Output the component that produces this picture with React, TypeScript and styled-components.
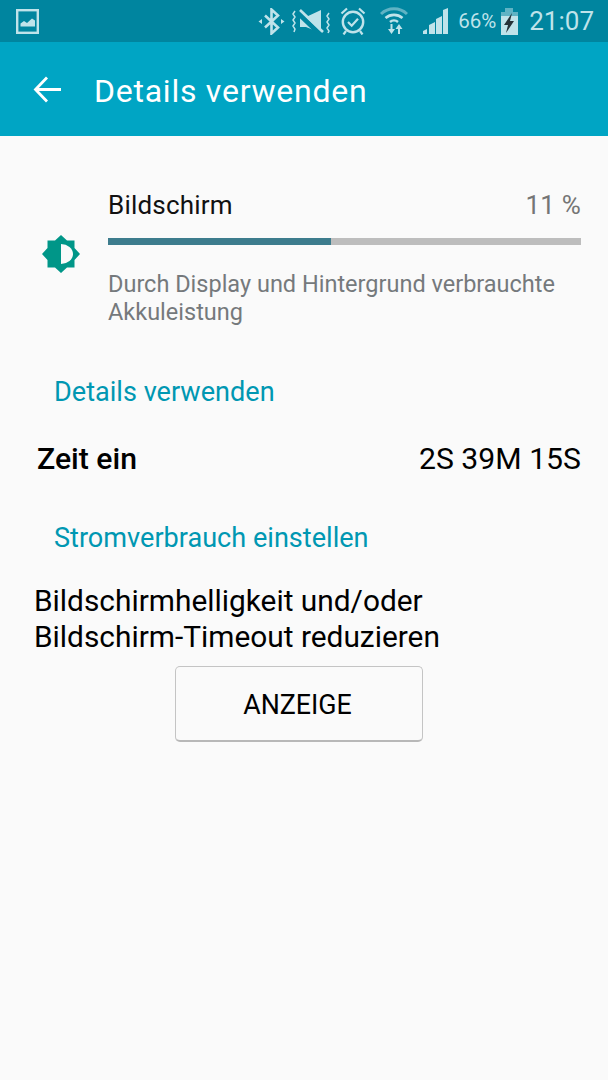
import styled, { createGlobalStyle } from 'styled-components';

const GlobalStyle = createGlobalStyle`
  html, body {
    margin: 0;
    padding: 0;
    background: #fafafa;
  }
  * {
    box-sizing: border-box;
  }
`

const Page = styled.div`
  width: 608px;
  height: 1080px;
  background: #fafafa;
  font-family: Roboto, "Noto Sans", sans-serif;
  overflow: hidden;
`

const StatusBar = styled.div`
  height: 42px;
  background: #00859f;
  color: #bfe3ea;
  display: flex;
  align-items: center;
  padding: 0 14px 0 16px;
`

const StatusRight = styled.div`
  margin-left: auto;
  display: flex;
  align-items: center;
`

const StatusIcon = styled.svg<{ $gap: number }>`
  display: block;
  margin-left: ${(p) => p.$gap}px;
  flex-shrink: 0;
`

const Percent = styled.span`
  font-size: 20.5px;
  margin-left: 10px;
`

const Clock = styled.span`
  font-size: 26px;
  margin-left: 11px;
`

const AppBar = styled.header`
  height: 94px;
  background: #00a5c4;
  color: #fff;
  display: flex;
  align-items: center;
  padding: 0 0 0 33px;
`

const Title = styled.h1`
  margin: 3px 0 0 32px;
  font-size: 32px;
  font-weight: 400;
  letter-spacing: 0.75px;
`

const UsageRow = styled.section`
  display: flex;
  align-items: flex-start;
  padding: 50px 27px 0 42px;
`

const UsageIcon = styled.svg`
  display: block;
  flex-shrink: 0;
  margin-top: 49px;
`

const UsageBody = styled.div`
  flex: 1;
  margin-left: 28px;
`

const UsageHead = styled.div`
  display: flex;
  justify-content: space-between;
  font-size: 26px;
  letter-spacing: 0.2px;
  line-height: 38px;
  color: #111;
`

const UsageValue = styled.span`
  color: #757575;
`

const Bar = styled.div`
  height: 7px;
  margin-top: 14px;
  background: #bdbdbd;
`

const BarFill = styled.div`
  height: 100%;
  background: #3d7c8d;
`

const Description = styled.p`
  margin: 25px 0 0;
  font-size: 23.5px;
  line-height: 28px;
  color: #75797c;
`

const SectionLink = styled.div<{ $top: number }>`
  margin-top: ${(p) => p.$top}px;
  padding-left: 54px;
  font-size: 27.1px;
  line-height: 34px;
  color: #0097b2;
`

const TimeRow = styled.div`
  display: flex;
  justify-content: space-between;
  margin-top: 32px;
  padding: 0 27px 0 37px;
  font-size: 30.2px;
  line-height: 36px;
  color: #000;
`

const TimeLabel = styled.span`
  font-weight: 500;
`

const Hint = styled.p`
  margin: 28px 0 0;
  padding-left: 34px;
  font-size: 29.85px;
  line-height: 36px;
  color: #000;
`

const ActionButton = styled.button`
  display: block;
  width: 248px;
  height: 76px;
  margin: 11px 0 0 175px;
  padding: 2px 3px 0 0;
  background: #fafafa;
  border: 1px solid #c4c4c4;
  border-bottom: 2px solid #b8b8b8;
  border-radius: 5px;
  font-family: inherit;
  font-size: 26.8px;
  color: #000;
`

export default function App() {
  return (
    <Page>
      <GlobalStyle />
      <StatusBar>
        <svg width="23" height="25" viewBox="0 0 23 25" fill="none">
          <rect x="1.2" y="1.2" width="20.6" height="22.6" stroke="currentColor" strokeWidth="2.4" />
          <path d="M4.5 17.5v-3l3.5-2.5 3 2 5-4.5 3 2v6z" fill="currentColor" />
        </svg>
        <StatusRight>
          <StatusIcon $gap={0} width="27" height="27" viewBox="0 0 27 27" fill="none">
            <path d="M7 7.5l13 12-6.5 6V1.5l6.5 6-13 12" stroke="currentColor" strokeWidth="2.6" />
            <path d="M0.5 13.5l3.5-2.5v5zM26.5 13.5l-3.5-2.5v5z" fill="currentColor" />
          </StatusIcon>
          <StatusIcon $gap={7} width="40" height="27" viewBox="0 0 40 27" fill="none">
            <path d="M3 3L1 6l2 3-2 3 2 3-2 3 2 3-1 3M37 5l-2 3 2 3-2 3 2 3-2 3 2 3-1 2" stroke="currentColor" strokeWidth="1.5" />
            <path d="M8 9h6l15-7v23L14 19H8z" fill="currentColor" />
            <path d="M6 5l22 21" stroke="#00859f" strokeWidth="5" />
            <path d="M8 2l23 22" stroke="currentColor" strokeWidth="2.6" />
          </StatusIcon>
          <StatusIcon $gap={8} width="26" height="28" viewBox="0 0 26 28" fill="none">
            <circle cx="13" cy="15" r="10.2" stroke="currentColor" strokeWidth="2.4" />
            <path d="M8 15l3.7 3.7 6.3-7M1.5 6.5l5.5-5M24.5 6.5l-5.5-5M6 24l-2.5 3.5M20 24l2.5 3.5" stroke="currentColor" strokeWidth="2.2" />
          </StatusIcon>
          <StatusIcon $gap={14} width="28" height="30" viewBox="0 0 28 30" fill="none">
            <path d="M1 8a19 19 0 0 1 26 0" stroke="#5fb3c4" strokeWidth="3" />
            <path d="M5.5 12a13 13 0 0 1 17 0" stroke="currentColor" strokeWidth="2.6" />
            <path d="M10 16a6 6 0 0 1 8 0" stroke="currentColor" strokeWidth="2.4" />
            <path d="M11.5 18v6M19 28v-6" stroke="currentColor" strokeWidth="2" />
            <path d="M8 23l3.5 5 3.5-5zM15.5 23l3.5-5 3.5 5z" fill="currentColor" />
          </StatusIcon>
          <StatusIcon $gap={14} width="26" height="26" viewBox="0 0 26 26" fill="currentColor">
            <path d="M1 26v-3l4-2v5zM7 26V17l6-3v12zM14 26V11l6-3v18zM21 26V2l5-2v26z" />
          </StatusIcon>
          <Percent>66%</Percent>
          <StatusIcon $gap={5} width="17" height="27" viewBox="0 0 17 27">
            <path d="M4 0h8v4H4z" fill="#5fb3c4" />
            <path d="M0 4h17v4H0z" fill="#5fb3c4" />
            <path d="M0 8h17v19H0z" fill="currentColor" />
            <path d="M11 5L3 17h4l-2 8 8-12H9z" fill="#263238" />
          </StatusIcon>
          <Clock>21:07</Clock>
        </StatusRight>
      </StatusBar>
      <AppBar>
        <svg width="29" height="27" viewBox="0 0 29 27" fill="none" stroke="#fff" strokeWidth="2.8">
          <path d="M28 13.5H3M14 1.5L2.5 13.5 14 25.5" />
        </svg>
        <Title>Details verwenden</Title>
      </AppBar>
      <UsageRow>
        <UsageIcon width="38" height="38" viewBox="0 0 38 38">
          <path d="M19 0l6 5.5h7.5V13l5.5 6-5.5 6v7.5H25L19 38l-6-5.5H5.5V25L0 19l5.5-6V5.5H13z" fill="#009688" />
          <path d="M19 9a12 10 0 0 1 0 20z" fill="#fafafa" />
        </UsageIcon>
        <UsageBody>
          <UsageHead>
            <span>Bildschirm</span>
            <UsageValue>11 %</UsageValue>
          </UsageHead>
          <Bar>
            <BarFill style={{ width: '47.1%' }} />
          </Bar>
          <Description>Durch Display und Hintergrund verbrauchte Akkuleistung</Description>
        </UsageBody>
      </UsageRow>
      <SectionLink $top={49}>Details verwenden</SectionLink>
      <TimeRow>
        <TimeLabel>Zeit ein</TimeLabel>
        <span>2S 39M 15S</span>
      </TimeRow>
      <SectionLink $top={44}>Stromverbrauch einstellen</SectionLink>
      <Hint>
        Bildschirmhelligkeit und/oder
        <br />
        Bildschirm-Timeout reduzieren
      </Hint>
      <ActionButton>ANZEIGE</ActionButton>
    </Page>
  );
}
